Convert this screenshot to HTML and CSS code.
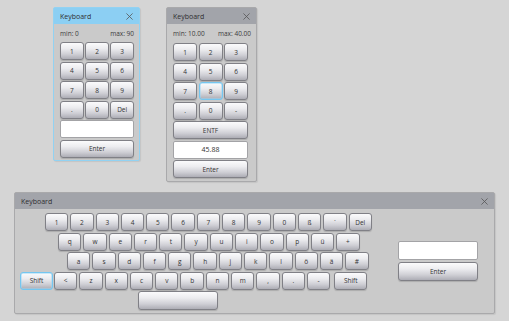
FILE: index.html
```html
<!DOCTYPE html>
<html>
<head>
<meta charset="utf-8">
<link rel="stylesheet" href="styles.css">
</head>
<body>
<div class="win win-num win-a active">
  <div class="title"><span>Keyboard</span><svg class="x" viewBox="0 0 8 8"><path d="M0.5 0.5L7.5 7.5M7.5 0.5L0.5 7.5"/></svg></div>
  <div class="info"><span>min: 0</span><span>max: 90</span></div>
  <div class="pad">
    <div class="key">1</div><div class="key">2</div><div class="key">3</div>
    <div class="key">4</div><div class="key">5</div><div class="key">6</div>
    <div class="key">7</div><div class="key">8</div><div class="key">9</div>
    <div class="key">.</div><div class="key">0</div><div class="key">Del</div>
    <div class="field span3"></div>
    <div class="key span3">Enter</div>
  </div>
</div>

<div class="win win-num win-b">
  <div class="title"><span>Keyboard</span><svg class="x" viewBox="0 0 8 8"><path d="M0.5 0.5L7.5 7.5M7.5 0.5L0.5 7.5"/></svg></div>
  <div class="info"><span>min: 10.00</span><span>max: 40.00</span></div>
  <div class="pad">
    <div class="key">1</div><div class="key">2</div><div class="key">3</div>
    <div class="key">4</div><div class="key">5</div><div class="key">6</div>
    <div class="key">7</div><div class="key focus">8</div><div class="key">9</div>
    <div class="key">.</div><div class="key">0</div><div class="key">-</div>
    <div class="key span3">ENTF</div>
    <div class="field span3">45.88</div>
    <div class="key span3">Enter</div>
  </div>
</div>

<div class="win win-full">
  <div class="title"><span>Keyboard</span><svg class="x" viewBox="0 0 8 8"><path d="M0.5 0.5L7.5 7.5M7.5 0.5L0.5 7.5"/></svg></div>
  <div class="kb-body">
    <div class="kb-main">
      <div class="row r1">
        <div class="key">1</div><div class="key">2</div><div class="key">3</div><div class="key">4</div><div class="key">5</div><div class="key">6</div><div class="key">7</div><div class="key">8</div><div class="key">9</div><div class="key">0</div><div class="key">ß</div><div class="key">´</div><div class="key">Del</div>
      </div>
      <div class="row r2">
        <div class="key">q</div><div class="key">w</div><div class="key">e</div><div class="key">r</div><div class="key">t</div><div class="key">y</div><div class="key">u</div><div class="key">i</div><div class="key">o</div><div class="key">p</div><div class="key">ü</div><div class="key">+</div>
      </div>
      <div class="row r3">
        <div class="key">a</div><div class="key">s</div><div class="key">d</div><div class="key">f</div><div class="key">g</div><div class="key">h</div><div class="key">j</div><div class="key">k</div><div class="key">l</div><div class="key">ö</div><div class="key">ä</div><div class="key">#</div>
      </div>
      <div class="row r4">
        <div class="key shift focus">Shift</div><div class="key">&lt;</div><div class="key">z</div><div class="key">x</div><div class="key">c</div><div class="key">v</div><div class="key">b</div><div class="key">n</div><div class="key">m</div><div class="key">,</div><div class="key">.</div><div class="key">-</div><div class="key shift shift-r">Shift</div>
      </div>
      <div class="row r5">
        <div class="key space"></div>
      </div>
    </div>
    <div class="kb-side">
      <div class="field"></div>
      <div class="key">Enter</div>
    </div>
  </div>
</div>
</body>
</html>
```
FILE: styles.css
```css
* { box-sizing: border-box; }
html, body { margin: 0; padding: 0; }
body {
  width: 509px;
  height: 321px;
  background: #d5d5d5;
  font-family: "Open Sans", "DejaVu Sans", sans-serif;
  font-size: 7px;
  color: #333;
  position: relative;
  overflow: hidden;
}
.win {
  position: absolute;
  background: #cacaca;
  border: 1px solid #a9a9ab;
  border-radius: 2px;
  box-shadow: 1px 1px 1px rgba(0,0,0,0.08);
}
.win-a { left: 53px; top: 7px; width: 87px; height: 154px; border-color: #92d2f2; }
.win-b { left: 166px; top: 7px; width: 91px; height: 175px; }
.win-full { left: 14px; top: 192px; width: 481px; height: 122px; }

.title {
  height: 16px;
  background: #a2a4aa;
  display: flex;
  align-items: center;
  justify-content: space-between;
  padding: 0 6px 0 6px;
  font-size: 7px;
  color: #2e2e30;
}
.active .title { background: #8ccff3; }
.x { width: 7px; height: 7px; }
.x path { stroke: #555; stroke-width: 0.9; fill: none; }

.info {
  display: flex;
  justify-content: space-between;
  padding: 0 5px 0 6px;
  margin-top: 4px;
  height: 11px;
  line-height: 11px;
  font-size: 6.5px;
  color: #3a3a3a;
}
.pad {
  display: grid;
  grid-template-columns: repeat(3, 1fr);
  grid-auto-rows: 18px;
  column-gap: 1.5px;
  row-gap: 1.5px;
  margin-top: 3px;
  padding: 0 5px 0 6px;
}
.win-b .pad { padding: 0 8px 0 6px; margin-top: 4px; }
.span3 { grid-column: 1 / 4; }

.key {
  height: 18px;
  border: 1px solid #808086;
  border-radius: 3px;
  background: linear-gradient(#fbfbfc 0%, #ececef 35%, #cfcfd5 70%, #adadb5 100%);
  box-shadow: 0 1px 1px rgba(0,0,0,0.15);
  display: flex;
  align-items: center;
  justify-content: center;
  font-size: 6.5px;
  color: #333;
}
.key.focus { border-color: #74c6f0; box-shadow: inset 0 0 0 0.5px #9ad6f5; }
.field {
  height: 18px;
  background: #fff;
  border: 1px solid #a3a3a6;
  border-radius: 2px;
  display: flex;
  align-items: center;
  justify-content: center;
  font-size: 7px;
  color: #333;
}

.kb-body {
  display: grid;
  grid-template-columns: 378px 80px;
  padding: 4px 0 0 5px;
}
.kb-main { display: flex; flex-direction: column; gap: 1.5px; }
.row { display: flex; gap: 2px; }
.row .key { width: 23.3px; flex: none; }
.r1 { padding-left: 25px; }
.r2 { padding-left: 38px; }
.r3 { padding-left: 47px; }
.r4 { padding-left: 0; }
.r4 .shift { width: 33px; margin-right: -1px; }
.r4 .shift-r { width: 33px; margin-left: 2px; margin-right: 0; }
.r5 { padding-left: 118px; }
.r5 .space { width: 80px; height: 19px; }
.kb-side { display: flex; flex-direction: column; gap: 2px; padding-top: 28px; }
.kb-side .field { height: 19px; }
.kb-side .key { height: 19px; }
```
